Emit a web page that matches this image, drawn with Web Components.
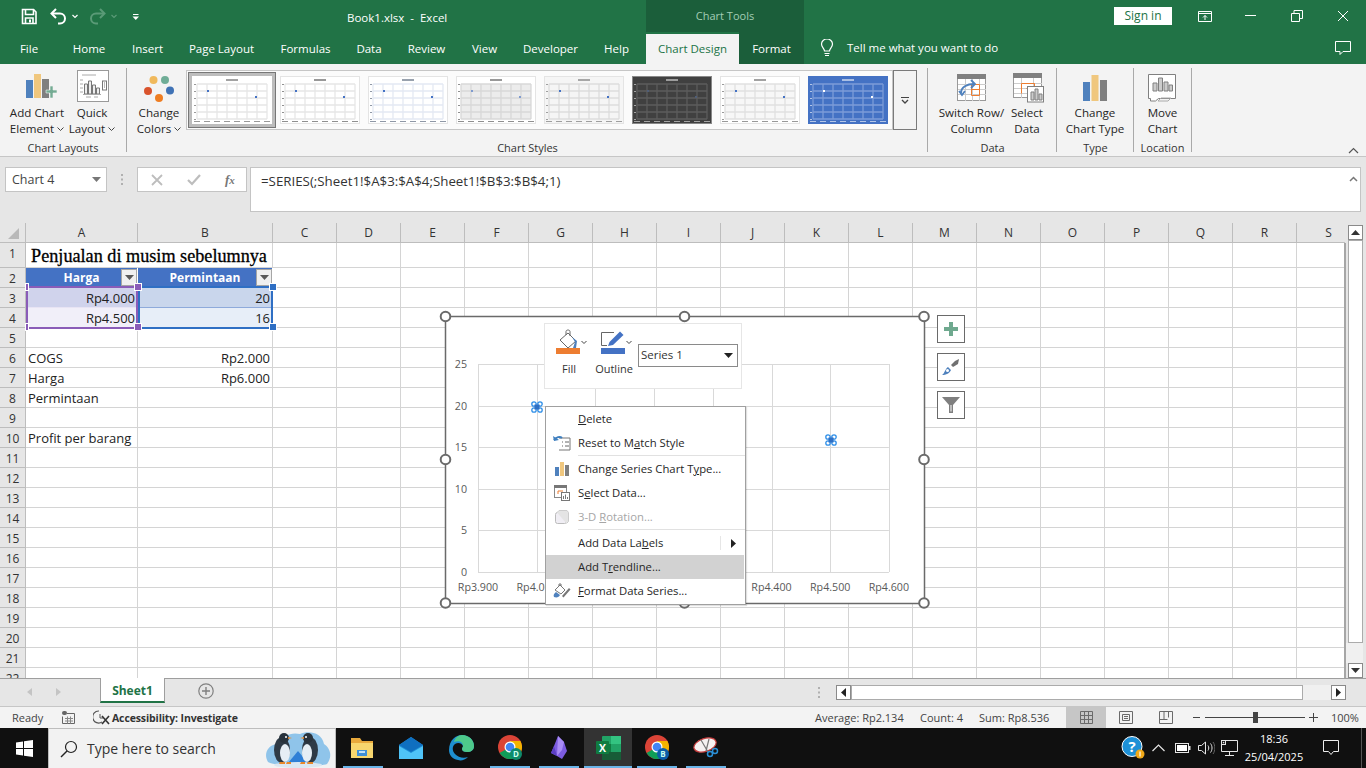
<!DOCTYPE html>
<html>
<head>
<meta charset="utf-8">
<title>Book1.xlsx - Excel</title>
<style>
  html, body { margin: 0; padding: 0; height: 100%; overflow: hidden; }
  body { width: 1366px; height: 768px; display: flex; flex-direction: column; font-family: "Open Sans", "Liberation Sans", sans-serif; font-size: 12px; background: #e6e6e6; }
</style>
</head>
<body>
<xl-titlebar></xl-titlebar>
<xl-tabs></xl-tabs>
<xl-ribbon></xl-ribbon>
<xl-formula></xl-formula>
<xl-sheet></xl-sheet>
<xl-sheettabs></xl-sheettabs>
<xl-status></xl-status>
<xl-taskbar></xl-taskbar>

<script>
const FONT = '"Open Sans", "Liberation Sans", sans-serif';

class XlTitlebar extends HTMLElement {
  constructor() {
    super();
    const shadow = this.attachShadow({ mode: 'open' });
    shadow.innerHTML = `
      <style>
        :host { display: flex; height: 32px; background: #217346; color: #fff; font: 12px ${FONT}; position: relative; flex: none; }
        .qat { width: 346px; display: flex; align-items: center; flex: none; }
        .title { width: 300px; flex: none; padding-left: 1px; box-sizing: border-box; font-size: 11.500px; line-height: 35px; }
        .tools { width: 158px; flex: none; background: #1b5e3a; color: #a3cdb5; text-align: center; font-size: 11px; line-height: 32px; }
        .right { flex: 1; display: flex; align-items: center; justify-content: flex-end; }
        .sign { width: 58px; height: 18px; background: #fff; color: #217346; text-align: center; line-height: 18px; margin-right: 10px; }
        .ctl { width: 46px; height: 32px; display: flex; align-items: center; justify-content: center; }
        svg { display: block; }
      </style>
      <div class="qat">
        <svg width="346" height="32" fill="none" stroke="#fff">
          <path d="M22.5 9.5h11l2.5 2.5v11.5h-13.5z" stroke-width="1.6"/>
          <path d="M25.5 9.5v5h8v-5M25.5 23.5v-5.500h7.500v5.500" stroke-width="1.6"/>
          <path d="M29 19.500h2v3h-2z" fill="#fff" stroke="none"/>
          <path d="M56 9l-4.500 4.500L56 18" stroke-width="2"/>
          <path d="M52 13.500h8a4.500 4.500 0 0 1 0 10h-2" stroke-width="2"/>
          <path d="M72.500 15l2.500 2.500 2.500-2.500" stroke-width="1.200"/>
          <g stroke="#5a9a77"><path d="M100 9l4.500 4.500L100 18" stroke-width="2"/><path d="M104 13.500h-8a4.500 4.500 0 0 0 0 10h2" stroke-width="2"/><path d="M111.500 15l2.500 2.500 2.500-2.500" stroke-width="1.200"/></g>
          <path d="M133 14.500h5.500" stroke-width="1"/><path d="M132.500 16.500h6.500l-3.250 3.500z" fill="#fff" stroke="none"/>
        </svg>
      </div>
      <div class="title">Book1.xlsx &nbsp;-&nbsp; Excel</div>
      <div class="tools">Chart Tools</div>
      <div class="right">
        <div class="sign">Sign in</div>
        <div class="ctl"><svg width="14" height="12" fill="none" stroke="#fff"><path d="M.5 1.500h13v10H.500zM.5 3.500h13" /><path d="M7 10V5.500M5 7.500l2-2 2 2"/></svg></div>
        <div class="ctl"><svg width="12" height="2"><path d="M0 .5h11" stroke="#fff"/></svg></div>
        <div class="ctl"><svg width="12" height="12" fill="none" stroke="#fff"><path d="M.5 3.500h8v8h-8zM3 3.500V.5h8.500v8H8.500"/></svg></div>
        <div class="ctl"><svg width="12" height="12" fill="none" stroke="#fff"><path d="M1 1l10 10M11 1L1 11"/></svg></div>
      </div>`;
  }
}

class XlTabs extends HTMLElement {
  constructor() {
    super();
    const shadow = this.attachShadow({ mode: 'open' });
    const tabs = [['File', 58], ['Home', 62], ['Insert', 55], ['Page Layout', 93], ['Formulas', 75], ['Data', 52], ['Review', 63], ['View', 53], ['Developer', 79], ['Help', 53]];
    shadow.innerHTML = `
      <style>
        :host { display: flex; height: 32px; background: #217346; color: #fff; font: 11.500px ${FONT}; flex: none; }
        .tab { flex: none; text-align: center; line-height: 34px; white-space: nowrap; }
        .spacer { width: 3px; flex: none; }
        .design { width: 93px; margin-top: 2px; background: #f3f3f3; color: #217346; line-height: 30px; box-sizing: border-box; }
        .format { width: 65px; background: #1b5e3a; }
        .tell { display: flex; align-items: center; flex: none; margin-left: 16px; gap: 13px; line-height: 34px; }
        .comment { margin-left: auto; margin-right: 14px; align-self: center; }
        svg { display: block; }
      </style>
      ${tabs.map(([t, w]) => `<div class="tab" style="width:${w}px">${t}</div>`).join('')}
      <div class="spacer"></div>
      <div class="tab design">Chart Design</div>
      <div class="tab format">Format</div>
      <div class="tell">
        <svg width="14" height="18" fill="none" stroke="#fff" stroke-width="1.200"><path d="M4.500 12c0-2.500-3-3.500-3-7a5.500 5 0 0 1 11 0c0 3.500-3 4.500-3 7z"/><path d="M4.500 14.500h5M5 16.500h4"/></svg>
        <span>Tell me what you want to do</span>
      </div>
      <svg class="comment" width="17" height="16" fill="none" stroke="#fff"><path d="M.5 1.500h15v10H8l-3 3v-3H.5z"/></svg>`;
  }
}

class XlRibbonButton extends HTMLElement {
  constructor() {
    super();
    const shadow = this.attachShadow({ mode: 'open' });
    shadow.innerHTML = `
      <style>
        :host { display: flex; flex-direction: column; align-items: center; flex: none; height: 71px; color: #262626; font: 11.600px/16px ${FONT}; text-align: center; white-space: nowrap; }
        .icon { height: 37px; display: flex; align-items: center; justify-content: center; flex: none; }
        .lbl { margin-top: -1px; }
      </style>
      <div class="icon"><slot name="icon"></slot></div>
      <div class="lbl"><slot></slot></div>`;
  }
}

class XlChartThumb extends HTMLElement {
  connectedCallback() { this.render(); }
  constructor() {
    super();
    this.attachShadow({ mode: 'open' });
  }
  render() {
    const bg = this.getAttribute('bg') || '#fff';
    const line = this.getAttribute('line') || '#e6e6e6';
    const dot = this.getAttribute('dot') || '#4472c4';
    const txt = this.getAttribute('txt') || '#555';
    const shade = this.getAttribute('shade') || 'none';
    const edge = this.getAttribute('edge') || '#e4e4e4';
    let grid = '';
    for (let i = 0; i < 6; i++) grid += `<path d="M5 ${8 + i * 7}h70"/>`;
    for (let i = 0; i < 8; i++) grid += `<path d="M${5 + i * 10} 8v35"/>`;
    let ticks = '';
    for (let i = 0; i < 6; i++) ticks += `<rect x="2" y="${8 + i * 7}" width="2" height="1" fill="${txt}" opacity=".6"/>`;
    let xticks = '';
    for (let i = 0; i < 8; i++) xticks += `<rect x="${2 + i * 10}" y="45" width="6" height="1" fill="${txt}" opacity=".6"/>`;
    this.shadowRoot.innerHTML = `
      <style>:host { display: block; width: 80px; height: 48px; flex: none; } svg { display: block; }</style>
      <svg width="80" height="48">
        <rect x=".5" y=".5" width="79" height="47" fill="${bg}" stroke="${edge}"/>
        <rect x="34" y="3" width="12" height="2" fill="${txt}" opacity=".55"/>
        <rect x="5" y="8" width="70" height="35" fill="${shade}"/>
        <g stroke="${line}" stroke-width="1.300" fill="none">${grid}</g>
        ${ticks}${xticks}
        <rect x="15" y="14" width="2" height="2" fill="${dot}"/>
        <rect x="63" y="20" width="2" height="2" fill="${dot}"/>
      </svg>`;
  }
}

class XlRibbon extends HTMLElement {
  constructor() {
    super();
    const shadow = this.attachShadow({ mode: 'open' });
    const chev = '<svg class="inl" width="7" height="4" fill="none" stroke="#444"><path d="M.5 .5l3 3 3-3"/></svg>';
    shadow.innerHTML = `
      <style>
        :host { display: flex; height: 92px; background: #f3f3f3; border-bottom: 1px solid #c6c6c6; box-sizing: content-box; padding: 0; position: relative; color: #262626; font: 12px ${FONT}; flex: none; }
        .group { flex: none; display: flex; flex-direction: column; height: 92px; position: relative; box-sizing: border-box; }
        .group::after { content: ""; position: absolute; right: 0; top: 4px; height: 84px; width: 1px; background: #a9a9a9; }
        .row { display: flex; height: 76px; padding-top: 5px; box-sizing: border-box; flex: none; }
        .label { text-align: center; line-height: 16px; color: #333; font-size: 11px; }
        .gallery { display: flex; margin: 1px 0 0 -1px; width: 707px; height: 60px; background: #fbfbfb; border: 1px solid #c6c6c6; box-sizing: border-box; padding: 5px 0 0 0; gap: 8px; position: relative; }
        .selected { position: absolute; left: 1px; top: 1px; width: 88px; height: 56px; box-sizing: border-box; border: 4px solid #bdbdbd; outline: 1px solid #777; outline-offset: -1px; }
        .thumbs { display: flex; gap: 8px; padding-left: 5px; }
        .more { width: 24px; height: 60px; margin-top: 1px; flex: none; box-sizing: border-box; border: 1px solid #7a7a7a; display: flex; align-items: center; justify-content: center; background: #f3f3f3; }
        .collapse { position: absolute; right: 7px; bottom: 2px; }
        svg { display: block; }
        svg.inl { display: inline-block; margin-left: 3px; vertical-align: 2px; }
      </style>

      <div class="group" style="width:127px">
        <div class="row" style="padding-left:5px">
          <xl-ribbon-button style="width:64px">
            <svg slot="icon" width="32" height="34" style="margin-left:7px">
              <rect x="1" y="9" width="7" height="18" fill="#4f81bd"/><rect x="9" y="3" width="7" height="24" fill="#f0c77e"/><rect x="17" y="8" width="7" height="19" fill="#7f7f7f"/>
              <path d="M21 19h4v-4h3v4h4v3h-4v5h-3v-5h-4z" fill="#74ab93" stroke="#f3f3f3" stroke-width=".6"/>
            </svg>
            Add Chart<br>Element${chev}
          </xl-ribbon-button>
          <xl-ribbon-button style="width:46px">
            <svg slot="icon" width="32" height="32" fill="none" style="margin:-3px 0 0 1px">
              <rect x=".5" y=".5" width="31" height="31" stroke="#999" fill="#fff"/>
              <path d="M5 5h14M3 10h3M3 14h3M3 18h3M3 22h3" stroke="#aaa"/>
              <path d="M7.500 24V14h3v10zM11.500 24V11h3v13zM15.500 24V15h3v9zM19.500 24v-6h3v6z" stroke="#777" fill="#eee"/>
              <path d="M6 24.500h18M9 27h5M17 27h4" stroke="#aaa"/>
              <rect x="25.500" y="11" width="4" height="9" stroke="#777" /><path d="M27 13h1M27 15h1M27 17h1" stroke="#777"/>
            </svg>
            Quick<br>Layout${chev}
          </xl-ribbon-button>
        </div>
        <div class="label" style="padding-right:1px">Chart Layouts</div>
      </div>

      <div class="group" style="width:801px">
        <div class="row" style="padding-left:4px">
          <xl-ribbon-button style="width:56px">
            <svg slot="icon" width="30" height="30">
              <circle cx="9.500" cy="7" r="4" fill="#f0b95c"/><circle cx="21" cy="7" r="4" fill="#70ad97"/><circle cx="4" cy="18" r="4" fill="#d9532c"/><circle cx="26" cy="17.500" r="4" fill="#3f72b5"/><circle cx="15" cy="25" r="4" fill="#ee7d22"/>
            </svg>
            Change<br>Colors${chev}
          </xl-ribbon-button>
          <div class="gallery">
            <div class="selected"></div>
            <div class="thumbs">
              <xl-chart-thumb edge="#fff"></xl-chart-thumb>
              <xl-chart-thumb txt="#444"></xl-chart-thumb>
              <xl-chart-thumb line="#e3e9f3" txt="#44546a"></xl-chart-thumb>
              <xl-chart-thumb shade="#ececec" line="#d8d8d8" txt="#444" dot="#7f9bcf"></xl-chart-thumb>
              <xl-chart-thumb bg="#f5f5f5" line="#dcdcdc" txt="#666"></xl-chart-thumb>
              <xl-chart-thumb bg="#404040" line="#5c5c5c" txt="#e8e8e8" dot="#4f5d76" edge="#888"></xl-chart-thumb>
              <xl-chart-thumb line="#e0e0e0" txt="#555" shade="#f7f7f7"></xl-chart-thumb>
              <xl-chart-thumb bg="#4472c4" line="#7c9cd8" txt="#fff" dot="#fff" edge="#4472c4"></xl-chart-thumb>
            </div>
          </div>
          <div class="more"><svg width="10" height="9" fill="none" stroke="#444"><path d="M1 1.500h8"/><path d="M2 4l3 3 3-3" stroke-width="1.300"/></svg></div>
        </div>
        <div class="label">Chart Styles</div>
      </div>

      <div class="group" style="width:129px">
        <div class="row" style="padding-left:10px">
          <xl-ribbon-button style="width:67px">
            <svg slot="icon" width="30" height="28" fill="none">
              <rect x=".5" y=".5" width="28" height="26" fill="#fff" stroke="#999"/><rect x="0" y="0" width="29" height="5" fill="#808080"/>
              <path d="M1 10.500h28M1 15.500h28M1 20.500h28M8.500 5v22M15.500 5v22M22.500 5v22" stroke="#ccc"/>
              <path d="M14.500 10.500h8v11h-8zM14.500 15.500h8" stroke="#ed7d31" />
              <path d="M4 19c0-6 6-9 13-9" stroke="#4f81bd" stroke-width="2"/><path d="M14 6l4 4-4 4" stroke="#4f81bd" stroke-width="1.800"/><path d="M2 17l3 4 3-4" stroke="#4f81bd" stroke-width="1.800"/>
            </svg>
            Switch Row/<br>Column
          </xl-ribbon-button>
          <xl-ribbon-button style="width:44px">
            <svg slot="icon" width="31" height="30" fill="none" style="margin-left:2px">
              <rect x=".5" y=".5" width="28" height="24" fill="#fff" stroke="#999"/><rect x="0" y="0" width="29" height="5" fill="#808080"/>
              <path d="M1 10.500h28M1 15.500h28M1 20.500h28M8.500 5v20M20.500 5v20" stroke="#ccc"/>
              <path d="M8.500 20.500v-10h13v5h-8" stroke="#ed7d31"/>
              <rect x="14.500" y="13.500" width="16" height="15.500" fill="#fff" stroke="#808080"/>
              <path d="M18 27v-8h3v8zM22 27V16h3v11zM26 27v-6h3v6z" fill="#ccc" stroke="#808080"/>
            </svg>
            Select<br>Data
          </xl-ribbon-button>
        </div>
        <div class="label">Data</div>
      </div>

      <div class="group" style="width:77px">
        <div class="row" style="justify-content:center;padding-right:1px">
          <xl-ribbon-button>
            <svg slot="icon" width="24" height="28"><rect x="0" y="8" width="7" height="19" fill="#4f81bd"/><rect x="8.500" y="1" width="7" height="26" fill="#f0c77e"/><rect x="17" y="6" width="7" height="21" fill="#7f7f7f"/></svg>
            Change<br>Chart Type
          </xl-ribbon-button>
        </div>
        <div class="label">Type</div>
      </div>

      <div class="group" style="width:58px">
        <div class="row" style="justify-content:center;padding-right:1px">
          <xl-ribbon-button>
            <svg slot="icon" width="29" height="28" fill="none">
              <path d="M.5 .5h27v24h-17l-3 2.500H2.500V24.500H.5z" fill="#fff" stroke="#808080"/>
              <path d="M5 17V9h4v8zM10.500 17V4h4v13zM16 17V8h4v9zM21 17v-6h3.500v6z" fill="#ccc" stroke="#808080"/>
              <path d="M10 27l3-3h10l-3 3z" stroke="#aaa"/>
            </svg>
            Move<br>Chart
          </xl-ribbon-button>
        </div>
        <div class="label" style="padding-right:1px">Location</div>
      </div>

      <svg class="collapse" width="11" height="7" fill="none" stroke="#555" stroke-width="1.200"><path d="M1 6l4.500-4.500L10 6"/></svg>`;
  }
}

class XlFormula extends HTMLElement {
  constructor() {
    super();
    const shadow = this.attachShadow({ mode: 'open' });
    shadow.innerHTML = `
      <style>
        :host { display: flex; height: 66px; box-sizing: border-box; padding: 10px 5px 0 5px; background: #e6e6e6; color: #444; font: 12px ${FONT}; flex: none; align-items: flex-start; }
        .box { background: #fff; border: 1px solid #c4c4c4; box-sizing: border-box; }
        .name { width: 102px; height: 25px; padding-left: 6px; line-height: 23px; position: relative; font-size: 12.500px; }
        .name svg { position: absolute; right: 5px; top: 9px; }
        .dots { width: 30px; height: 25px; display: flex; align-items: center; justify-content: center; }
        .fn { width: 110px; height: 25px; display: flex; align-items: center; color: #777; }
        .fn svg { display: block; }
        .text { margin-left: 3px; width: 1111px; height: 45px; padding: 4px 0 0 10px; line-height: 18px; position: relative; color: #333; font-size: 13.300px; }
        .text svg { position: absolute; right: 2px; top: 8px; }
        .fx { font: italic bold 13px "Liberation Serif", serif; color: #777; margin-left: 24px; }
      </style>
      <div class="box name">Chart 4<svg width="9" height="5"><path d="M0 0h9L4.500 5z" fill="#777"/></svg></div>
      <div class="dots"><svg width="3" height="11"><path d="M0 0h2v2H0zM0 4.500h2v2H0zM0 9h2v2H0z" fill="#b0b0b0"/></svg></div>
      <div class="box fn">
        <svg width="12" height="12" style="margin-left:13px" fill="none" stroke="#bdbdbd" stroke-width="1.800"><path d="M1 1l10 10M11 1L1 11"/></svg>
        <svg width="14" height="12" style="margin-left:24px" fill="none" stroke="#bdbdbd" stroke-width="2.200"><path d="M1 6l4 4 8-9"/></svg>
        <span class="fx">f<span style="font-size:11px">x</span></span>
      </div>
      <div class="box text">=SERIES(;Sheet1!$A$3:$A$4;Sheet1!$B$3:$B$4;1)
        <svg width="9" height="6" fill="none" stroke="#777" stroke-width="1.500"><path d="M1 5l3.500-3.500L8 5"/></svg>
      </div>`;
  }
}

class XlChart extends HTMLElement {
  constructor() {
    super();
    const shadow = this.attachShadow({ mode: 'open' });
    // chart coordinates are page coordinates minus (445, 316)
    const ox = 445, oy = 316;
    const xs = [], ys = [];
    for (let i = 0; i < 8; i++) xs.push(478 + i * 58.7 - ox);
    for (let i = 0; i < 6; i++) ys.push(364 + i * 41.6 - oy);
    const grid = xs.map(x => `<path d="M${Math.round(x) + .5} ${ys[0]}V${ys[5]}"/>`).join('') +
      ys.map(y => `<path d="M${xs[0]} ${Math.round(y) + .5}H${xs[7]}"/>`).join('');
    const ylab = ['25', '20', '15', '10', '5', '0'].map((t, i) => `<text x="22" y="${ys[i] + 4}" text-anchor="end">${t}</text>`).join('');
    // Rp4.100 to Rp4.300 sit behind the context menu, so they are left out
    const xlab = [['Rp3.900', 0], ['Rp4.000', 1], ['Rp4.400', 5], ['Rp4.500', 6], ['Rp4.600', 7]].map(([t, i]) => `<text x="${xs[i]}" y="275" text-anchor="middle">${t}</text>`).join('');
    const pt = (x, y) => `<g transform="translate(${x} ${y})"><g fill="#fff" stroke="#2f8fe8" stroke-width="1.300"><circle cx="-3" cy="-3" r="2.200"/><circle cx="3" cy="-3" r="2.200"/><circle cx="-3" cy="3" r="2.200"/><circle cx="3" cy="3" r="2.200"/></g><path d="M-2.500-2.500h5v5h-5z" fill="#2f6fc4"/></g>`;
    const handle = (x, y) => `<circle cx="${x}" cy="${y}" r="4.800" fill="#fff" stroke="#6a6a6a" stroke-width="2"/>`;
    shadow.innerHTML = `
      <style>
        :host { display: block; position: absolute; left: 445px; top: 93px; width: 480px; height: 288px; background: #fff; font: 11.500px ${FONT}; }
        svg.main { display: block; position: absolute; left: 0; top: 0; overflow: visible; }
        text { fill: #595959; font: 10.700px ${FONT}; }
      </style>
      <svg class="main" width="480" height="288">
        <rect x="0.500" y="0.500" width="479" height="287" fill="#fff" stroke="#6a6a6a" stroke-width="1.500"/>
        <g stroke="#d9d9d9" fill="none">${grid}</g>
        ${ylab}${xlab}
        ${pt(92, 91)}${pt(386, 124)}
        ${handle(.5, .5)}${handle(239.500, .5)}${handle(479, .5)}${handle(.5, 143.500)}${handle(479, 143.500)}${handle(.5, 287)}${handle(239.500, 287)}${handle(479, 287)}
      </svg>
      <slot></slot>`;
  }
}

class XlMiniBar extends HTMLElement {
  constructor() {
    super();
    const shadow = this.attachShadow({ mode: 'open' });
    shadow.innerHTML = `
      <style>
        :host { position: absolute; left: 99px; top: 7px; width: 198px; height: 66px; background: #fff; border: 1px solid #e6e6e6; box-sizing: border-box; display: flex; font: 11px ${FONT}; color: #333; }
        .col { display: flex; flex-direction: column; align-items: center; flex: none; }
        .icon { height: 32px; margin-top: 5px; }
        .lbl { line-height: 16px; }
        .combo { margin: 20px 0 0 3px; width: 100px; height: 23px; border: 1px solid #8a8a8a; box-sizing: border-box; padding-left: 2px; line-height: 20px; position: relative; font-size: 11.500px; }
        .combo svg { position: absolute; right: 4px; top: 8px; }
        svg { display: block; }
      </style>
      <div class="col" style="width:48px">
        <svg class="icon" width="36" height="32" fill="none">
          <rect x="5" y="19" width="24" height="6" fill="#ed7d31"/>
          <path d="M9 11L17 4l8 8-8 7z" fill="#fff" stroke="#666"/>
          <path d="M15 6V2.500c0-2 4-2 4 0V7" stroke="#666"/>
          <path d="M21 8l5 4-1 7h-3l2-6z" fill="#4f81bd"/>
          <path d="M30.500 12l2.500 2.500 2.500-2.500" stroke="#444"/>
        </svg>
        <div class="lbl">Fill</div>
      </div>
      <div class="col" style="width:42px">
        <svg class="icon" width="38" height="32" fill="none">
          <rect x="6" y="19" width="24" height="6" fill="#4472c4"/>
          <path d="M19 3.500H6.500v13H12" stroke="#666"/>
          <path d="M13 17l1.500-4L25 2.500l3.500 3.500L18 16z" fill="#4472c4"/>
          <path d="M31.500 12l2.500 2.500 2.500-2.500" stroke="#444"/>
        </svg>
        <div class="lbl">Outline</div>
      </div>
      <div class="combo">Series 1<svg width="9" height="5"><path d="M0 0h9L4.500 5z" fill="#222"/></svg></div>`;
  }
}

class XlMenuItem extends HTMLElement {
  constructor() {
    super();
    const shadow = this.attachShadow({ mode: 'open' });
    shadow.innerHTML = `
      <style>
        :host { display: flex; height: 24px; align-items: center; position: relative; color: #262626; font: 11.300px ${FONT}; white-space: nowrap; }
        :host([hot]) { background: #d2d2d2; margin-right: 1px; }
        :host([off]) { color: #a6a6a6; }
        .icon { width: 32px; height: 24px; display: flex; align-items: center; justify-content: center; flex: none; }
        .txt { padding-bottom: 1px; }
        .arrow { display: none; position: absolute; right: 0; width: 24px; align-items: center; justify-content: center; border-left: 1px solid #e6e6e6; height: 14px; top: 5px; }
        :host([sub]) .arrow { display: flex; }
      </style>
      <div class="icon"><slot name="icon"></slot></div>
      <div class="txt"><slot></slot></div>
      <div class="arrow"><svg width="5" height="9"><path d="M0 0l5 4.500L0 9z" fill="#222"/></svg></div>`;
  }
}

class XlMenu extends HTMLElement {
  constructor() {
    super();
    const shadow = this.attachShadow({ mode: 'open' });
    shadow.innerHTML = `
      <style>
        :host { position: absolute; left: 100px; top: 90px; width: 201px; height: 199px; box-sizing: border-box; background: #fff; border: 1px solid #a0a0a0; box-shadow: 1px 1px 1px rgba(0,0,0,.12); }
        .in { display: flex; flex-direction: column; }
      </style>
      <div class="in"><slot></slot></div>`;
  }
}

class XlMenuSep extends HTMLElement {
  constructor() {
    super();
    this.attachShadow({ mode: 'open' }).innerHTML = `<style>:host { display: block; height: 2px; margin-left: 32px; background: linear-gradient(#e1e1e1 1px, transparent 1px); }</style>`;
  }
}

class XlSideButton extends HTMLElement {
  constructor() {
    super();
    this.attachShadow({ mode: 'open' }).innerHTML = `
      <style>:host { display: flex; width: 28px; height: 28px; box-sizing: border-box; background: #fff; border: 1px solid #6a6a6a; align-items: center; justify-content: center; flex: none; }</style>
      <slot></slot>`;
  }
}

class XlSideButtons extends HTMLElement {
  constructor() {
    super();
    this.attachShadow({ mode: 'open' }).innerHTML = `
      <style>:host { position: absolute; left: 937px; top: 92px; display: flex; flex-direction: column; gap: 10px; }</style>
      <slot></slot>`;
  }
}

class XlSheet extends HTMLElement {
  constructor() {
    super();
    const shadow = this.attachShadow({ mode: 'open' });
    const colNames = 'ABCDEFGHIJKLMNOPQRS'.split('');
    let cells = `<div class="hd corner"><svg width="14" height="13"><path d="M13 1v11H2z" fill="#b9b9b9"/></svg></div>`;
    colNames.forEach(c => { cells += `<div class="hd col">${c}</div>`; });
    const data = {
      3: [['Rp4.000', 'r a3'], ['20', 'r b3']],
      4: [['Rp4.500', 'r a4'], ['16', 'r b4']],
      6: [['COGS', ''], ['Rp2.000', 'r']],
      7: [['Harga', ''], ['Rp6.000', 'r']],
      8: [['Permintaan', ''], ['', '']],
      10: [['Profit per barang', 'ov'], ['', '']],
    };
    for (let r = 1; r <= 22; r++) {
      cells += `<div class="hd row">${r}</div>`;
      if (r === 1) {
        cells += `<div class="c title" style="grid-column:span 2">Penjualan di musim sebelumnya</div>`;
      } else if (r === 2) {
        cells += `<div class="c th">Harga<span class="flt"><svg width="9" height="5"><path d="M0 0h9L4.500 5z" fill="#595959"/></svg></span></div>`;
        cells += `<div class="c th">Permintaan<span class="flt"><svg width="9" height="5"><path d="M0 0h9L4.500 5z" fill="#595959"/></svg></span></div>`;
      } else if (data[r]) {
        cells += data[r].map(([t, k]) => `<div class="c ${k}">${t}</div>`).join('');
      } else {
        cells += `<div class="c"></div><div class="c"></div>`;
      }
      for (let i = 0; i < 17; i++) cells += `<div class="c"></div>`;
    }
    shadow.innerHTML = `
      <style>
        :host { display: flex; height: 455px; position: relative; background: #fff; font: 13px ${FONT}; color: #222; flex: none; overflow: hidden; }
        .wrap { width: 1345px; height: 455px; flex: none; overflow: hidden; }
        .grid { display: grid; grid-template-columns: 26px 112px 135px repeat(17, 64px); grid-template-rows: 20px 25px repeat(21, 20px); width: 1362px; }
        .hd { background: #e6e6e6; box-sizing: border-box; border-right: 1px solid #bdbdbd; border-bottom: 1px solid #bdbdbd; color: #333; text-align: center; overflow: hidden; font-size: 12px; }
        .col { line-height: 20px; }
        .row { line-height: 21px; }
        .corner { display: flex; align-items: flex-end; justify-content: flex-end; padding: 0 5px 2px 0; }
        .c { box-sizing: border-box; border-right: 1px solid #d4d4d4; border-bottom: 1px solid #d4d4d4; padding: 0 2px 0 2px; line-height: 21px; white-space: nowrap; }
        .r { text-align: right; }
        .ov { overflow: visible; }
        .title { font: 18.200px/26px "Liberation Serif", serif; text-align: center; padding: 0; -webkit-text-stroke: .3px #000; color: #000; }
        .th { background: #4472c4; color: #fff; font-weight: 700; font-size: 12px; border-color: #4472c4; border-right-color: #fff; text-align: center; position: relative; padding: 0; line-height: 19px; }
        .flt { position: absolute; right: 0; top: 1px; width: 16px; height: 17px; box-sizing: border-box; background: #f0f0f0; border: 1px solid #a6a6a6; display: flex; align-items: center; justify-content: center; }
        .a3 { background: #d0d3ec; border-bottom-color: #e8e4f4; }
        .b3 { background: #c9d6ec; border-bottom-color: #8eaadb; }
        .a4 { background: #f1eff9; }
        .b4 { background: #e7eef8; }
        .rng { position: absolute; box-sizing: border-box; border: 2px solid; pointer-events: none; }
        .h { position: absolute; width: 6px; height: 6px; border: 1px solid #fff; box-sizing: content-box; }
        .edge { position: absolute; left: 1344px; top: 20px; width: 2px; bottom: 0; background: #a6a6a6; }
        .scroll { width: 21px; flex: none; background: #e6e6e6; display: flex; flex-direction: column; box-sizing: border-box; padding: 2px 3px 0 3px; align-items: stretch; }
        .btn { height: 15px; flex: none; background: #fff; border: 1px solid #8a8a8a; box-sizing: border-box; display: flex; align-items: center; justify-content: center; }
        .thumb { background: #fff; border: 1px solid #ababab; box-sizing: border-box; height: 403px; flex: none; }
        .gap { flex: 1; background: #f0f0f0; margin: 0 0 0 -2px; }
        svg { display: block; }
      </style>
      <div class="wrap"><div class="grid">${cells}</div></div>
      <div class="edge"></div>
      <div class="scroll">
        <div class="btn"><svg width="9" height="5"><path d="M0 5h9L4.500 0z" fill="#333"/></svg></div>
        <div class="thumb"></div>
        <div class="gap"></div>
        <div class="btn"><svg width="9" height="5"><path d="M0 0h9L4.500 5z" fill="#333"/></svg></div>
      </div>
      <div class="rng" style="left:26px;top:63px;width:112px;height:43px;border-color:#8a5cb8"></div>
      <div class="rng" style="left:138px;top:63px;width:135px;height:43px;border-color:#2f6fc4"></div>
      <div class="h" style="left:25px;top:60px;background:#8a5cb8;width:2px"></div>
      <div class="h" style="left:25px;top:100px;background:#8a5cb8;width:2px"></div>
      <div class="h" style="left:134px;top:60px;background:#8a5cb8"></div>
      <div class="h" style="left:134px;top:100px;background:#8a5cb8"></div>
      <div class="h" style="left:269px;top:60px;background:#2f6fc4"></div>
      <div class="h" style="left:269px;top:100px;background:#2f6fc4"></div>
      <xl-chart>
        <xl-mini-bar></xl-mini-bar>
        <xl-menu>
          <xl-menu-item><u>D</u>elete</xl-menu-item>
          <xl-menu-item>
            <svg slot="icon" width="18" height="16" fill="none"><path d="M6 3h11v12H6" stroke="#777" fill="#fff"/><path d="M9 7h1M12 7h4M9 11h1M12 11h4" stroke="#666"/><path d="M1 5c2-3 6-4 8-2" stroke="#3f7fbf" stroke-width="2"/><path d="M0 1l1 5 5-1z" fill="#3f7fbf"/></svg>
            Reset to M<u>a</u>tch Style
          </xl-menu-item>
          <xl-menu-sep></xl-menu-sep>
          <xl-menu-item>
            <svg slot="icon" width="14" height="14"><rect x="0" y="5" width="4" height="9" fill="#4f81bd"/><rect x="5" y="0" width="4" height="14" fill="#f0c77e"/><rect x="10" y="3" width="4" height="11" fill="#7f7f7f"/></svg>
            Change Series Chart T<u>y</u>pe...
          </xl-menu-item>
          <xl-menu-item>
            <svg slot="icon" width="16" height="16" fill="none"><rect x=".5" y=".5" width="12" height="12" fill="#fff" stroke="#888"/><rect width="13" height="3" fill="#777"/><path d="M4 9V6h5" stroke="#ed7d31"/><rect x="7.500" y="7.500" width="8" height="8" fill="#fff" stroke="#777"/><path d="M9.500 14v-3M11.500 14V9.500M13.500 14v-2" stroke="#777"/></svg>
            S<u>e</u>lect Data...
          </xl-menu-item>
          <xl-menu-item off>
            <svg slot="icon" width="14" height="14" fill="none"><rect x=".5" y="2.500" width="11" height="11" rx="2" fill="#f0eef4" stroke="#bbb"/><path d="M2 2.500l2-2h8l1.500 2v9l-2 2" stroke="#ccc" fill="#e4e4e4"/></svg>
            3-D <u>R</u>otation...
          </xl-menu-item>
          <xl-menu-sep></xl-menu-sep>
          <xl-menu-item sub>Add Data La<u>b</u>els</xl-menu-item>
          <xl-menu-item hot>Add T<u>r</u>endline...</xl-menu-item>
          <xl-menu-item>
            <svg slot="icon" width="18" height="16" fill="none"><path d="M2 7l5-5 5 5-4 4z" fill="#fff" stroke="#777"/><path d="M6 3V1h2v2" stroke="#777"/><path d="M3 9c-2 2-3 3-2 5 3 1 5 0 6-2" fill="#4f81bd"/><path d="M9 13l7-8 1.500 1.500-7 8z" fill="#777"/></svg>
            <u>F</u>ormat Data Series...
          </xl-menu-item>
        </xl-menu>
      </xl-chart>
      <xl-side-buttons>
        <xl-side-button><svg width="16" height="16"><path d="M6 1h4v5h5v4h-5v5H6v-5H1V6h5z" fill="#6fa98f"/></svg></xl-side-button>
        <xl-side-button><svg width="18" height="18"><path d="M17 1l-1 5-5 3-2-2 4-4z" fill="#707070"/><path d="M0 17c3-2 3-6 6-8l3 3c-1 3-5 5-9 5z" fill="#4f81bd"/><circle cx="5.500" cy="12.500" r="1.500" fill="#fff"/></svg></xl-side-button>
        <xl-side-button><svg width="20" height="18"><path d="M1 1h18l-7 8v8H8V9z" fill="#7f7f7f"/><path d="M9.500 9h1v6.500h-1z" fill="#fff"/></svg></xl-side-button>
      </xl-side-buttons>`;
  }
}

class XlSheettabs extends HTMLElement {
  constructor() {
    super();
    const shadow = this.attachShadow({ mode: 'open' });
    shadow.innerHTML = `
      <style>
        :host { display: flex; height: 29px; background: #e6e6e6; border-top: 1px solid #9e9e9e; border-bottom: 1px solid #c6c6c6; box-sizing: border-box; align-items: flex-start; font: 12px ${FONT}; flex: none; position: relative; }
        .nav { width: 100px; flex: none; height: 26px; display: flex; align-items: center; box-sizing: border-box; padding-left: 27px; gap: 24px; }
        .tab { width: 65px; height: 25px; flex: none; box-sizing: border-box; margin-top: -1px; background: #fff; color: #217346; font-weight: 700; text-align: center; line-height: 26px; border: 1px solid #9e9e9e; border-top: 0; border-bottom: 2px solid #217346; }
        .plus { margin: 4px 0 0 33px; flex: none; }
        .dots { margin: 8px 0 0 0; position: absolute; left: 818px; }
        .hs { position: absolute; left: 836px; display: flex; height: 14px; margin-top: 6px; }
        .b { width: 15px; height: 15px; background: #fff; box-sizing: border-box; border: 1px solid #8a8a8a; display: flex; align-items: center; justify-content: center; }
        .t { width: 452px; height: 15px; background: #fff; border: 1px solid #ababab; box-sizing: border-box; }
        .g { width: 28px; background: #f0f0f0; height: 15px; }
        svg { display: block; }
      </style>
      <div class="nav">
        <svg width="5" height="8"><path d="M5 0v8L0 4z" fill="#c4c4c4"/></svg>
        <svg width="5" height="8"><path d="M0 0v8l5-4z" fill="#c4c4c4"/></svg>
      </div>
      <div class="tab">Sheet1</div>
      <svg class="plus" width="16" height="16" fill="none" stroke="#808080"><circle cx="8" cy="8" r="7.200" stroke-width="1.200"/><path d="M8 4v8M4 8h8" stroke-width="1.400"/></svg>
      <svg class="dots" width="3" height="11"><path d="M0 0h2v2H0zM0 4.500h2v2H0zM0 9h2v2H0z" fill="#b0b0b0"/></svg>
      <div class="hs">
        <div class="b"><svg width="5" height="9"><path d="M5 0v9L0 4.500z" fill="#222"/></svg></div>
        <div class="t"></div><div class="g"></div>
        <div class="b"><svg width="5" height="9"><path d="M0 0v9l5-4.500z" fill="#222"/></svg></div>
      </div>`;
  }
}

class XlStatus extends HTMLElement {
  constructor() {
    super();
    const shadow = this.attachShadow({ mode: 'open' });
    shadow.innerHTML = `
      <style>
        :host { display: flex; height: 21px; background: #f3f3f3; color: #444; font: 11px ${FONT}; align-items: center; flex: none; }
        .s { white-space: nowrap; flex: none; }
        .view { width: 40px; height: 21px; display: flex; align-items: center; justify-content: center; flex: none; }
        .on { background: #c6c6c6; }
        .slider { width: 100px; height: 1px; background: #444; position: relative; margin: 0 0 0 4px; flex: none; }
        .slider i { position: absolute; left: 48px; top: -5px; width: 5px; height: 11px; background: #444; }
        svg { display: block; flex: none; }
      </style>
      <span class="s" style="margin-left:12px;width:50px">Ready</span>
      <svg width="13" height="13" fill="none" style="margin-right:18px"><rect x="0" y="0" width="5" height="4" rx="2" fill="#666"/><path d="M5 2.500h7.500v10H.5V5.500" stroke="#666"/><path d="M3 7.500h8M3 10h8M5.500 5.500v7M8.500 5.500v7" stroke="#888"/></svg>
      <svg width="17" height="15" fill="none" stroke="#555" style="margin-right:2px"><path d="M6 1a6 6 0 1 0 3 11" stroke-width="1.200"/><path d="M7 4v4h3" /><path d="M9 6l7 8M16 6l-7 8" stroke="#333" stroke-width="1.600"/></svg>
      <span class="s" style="width:703px;font-weight:700;font-size:10.500px;letter-spacing:-.12px;color:#333">Accessibility: Investigate</span>
      <span class="s" style="width:105px">Average: Rp2.134</span>
      <span class="s" style="width:59px">Count: 4</span>
      <span class="s" style="width:87px">Sum: Rp8.536</span>
      <div class="view on"><svg width="13" height="13" fill="none" stroke="#6a6a6a"><path d="M.5.5h12v12H.500zM.5 4.500h12M.5 8.500h12M4.500.5v12M8.500.5v12"/></svg></div>
      <div class="view"><svg width="14" height="13" fill="none" stroke="#6a6a6a"><path d="M.5.5h13v12H.500zM3.500 3.500h7v6h-7zM5 5.500h4M5 7.500h4"/></svg></div>
      <div class="view"><svg width="14" height="13" fill="none" stroke="#6a6a6a"><path d="M.5.5h13v12H.500zM.5 8.500h8M5 .5v8M9.500 .5v6"/></svg></div>
      <svg width="8" height="2" style="margin-left:7px"><path d="M0 .5h7" stroke="#444"/></svg>
      <div class="slider"><i></i></div>
      <svg width="9" height="9" style="margin-left:4px"><path d="M4 0h1v4h4v1H5v4H4V5H0V4h4z" fill="#444"/></svg>
      <span class="s" style="margin-left:13px">100%</span>`;
  }
}

class XlTaskbar extends HTMLElement {
  constructor() {
    super();
    const shadow = this.attachShadow({ mode: 'open' });
    const chrome = (badge, letter) => `
      <svg width="26" height="26" viewBox="0 0 26 26" style="margin-left:2px">
        <circle cx="12" cy="12" r="12" fill="#db4437"/>
        <path d="M12 12L1.600 18a12 12 0 0 0 14 5.500z" fill="#0f9d58"/>
        <path d="M12 6h10.400a12 12 0 0 1-6.800 17.500L12 12z" fill="#f4b400"/>
        <circle cx="12" cy="12" r="5.500" fill="#fff"/><circle cx="12" cy="12" r="4.300" fill="#4285f4"/>
        <circle cx="18" cy="19" r="6" fill="${badge}"/><text x="18" y="22" text-anchor="middle" font-size="8" font-weight="700" font-family="Open Sans" fill="#cfe">${letter}</text>
      </svg>`;
    shadow.innerHTML = `
      <style>
        :host { display: flex; height: 40px; background: #101010; color: #fff; font: 12px ${FONT}; flex: none; position: relative; }
        :host::after { content: ""; position: absolute; left: 1361px; top: 0; width: 1px; height: 40px; background: #555; }
        .start { width: 48px; flex: none; display: flex; align-items: center; justify-content: center; }
        .search { width: 288px; flex: none; background: #f2f2f2; border: 1px solid #bdbdbd; border-bottom: 0; box-sizing: border-box; display: flex; align-items: center; position: relative; color: #333; font-size: 14px; }
        .search span { margin-left: 9px; }
        .search .peng { position: absolute; left: 215px; top: 1px; }
        .apps { display: flex; margin-left: 7px; flex: none; }
        .app { width: 40px; height: 40px; display: flex; align-items: center; justify-content: center; position: relative; flex: none; box-sizing: border-box; }
        .app.wide { width: 48px; }
        .app.run::after { content: ""; position: absolute; left: 0; right: 0; bottom: 0; height: 2px; background: #6ab4e8; }
        .app.act { background: #333; }
        .tray { margin-left: auto; display: flex; align-items: center; flex: none; }
        .clock { text-align: center; width: 66px; line-height: 18px; font-size: 11px; margin-left: 3px; }
        svg { display: block; flex: none; }
      </style>
      <div class="start"><svg width="17" height="17"><path d="M0 2.500l7-1v6.500H0zM8 1.300L17 0v8H8zM0 9h7v6.500l-7-1zM8 9h9v8l-9-1.300z" fill="#fff"/></svg></div>
      <div class="search">
        <svg width="18" height="18" style="margin-left:11px" fill="none" stroke="#222" stroke-width="1.200"><circle cx="11" cy="7" r="5.500"/><path d="M7 11l-6 6" stroke-width="1.500"/></svg>
        <span>Type here to search</span>
        <svg class="peng" width="68" height="38" viewBox="0 0 68 38">
          <path d="M4 32c-5-8 0-18 10-18 4-9 14-12 22-10 8-4 22-2 24 10 6 4 9 12 3 20-6 3-52 3-59-2z" fill="#8fc4ea"/>
          <path d="M24 33l10-12 10 12z" fill="#2f7fd6"/>
          <ellipse cx="34" cy="35" rx="24" ry="3" fill="#dbe7f2"/>
          <ellipse cx="18" cy="20" rx="8" ry="13" fill="#2e3a46"/><ellipse cx="21" cy="23" rx="5" ry="9" fill="#e6eef5"/><circle cx="20" cy="8" r="5" fill="#28323c"/><path d="M24 7l4 1-4 1z" fill="#e8872a"/><circle cx="22" cy="7" r="1" fill="#fff"/><path d="M16 32h5v2h-6zM23 32h4v2h-5z" fill="#e8872a"/>
          <ellipse cx="46" cy="20" rx="8" ry="13" fill="#2e3a46"/><ellipse cx="43" cy="23" rx="5" ry="9" fill="#e6eef5"/><circle cx="44" cy="8" r="5" fill="#28323c"/><path d="M40 7l-4 1 4 1z" fill="#e8872a"/><circle cx="42" cy="7" r="1" fill="#fff"/><path d="M44 32h5v2h-6zM37 32h4v2h-5z" fill="#e8872a"/>
        </svg>
      </div>
      <div class="apps">
        <div class="app run" style="margin-right:4px">
          <svg width="24" height="22"><path d="M0 1h9l2 3h11v3H0z" fill="#e8a93c"/><rect y="6" width="22" height="15" fill="#f7d66e"/><path d="M6 13h10v6H6z" fill="#3f8fd6"/><path d="M8 14h6v2H8z" fill="#bfe0f7"/></svg>
        </div>
        <div class="app wide" style="margin-right:2px">
          <svg width="24" height="22"><path d="M12 0l12 8v14H0V8z" fill="#1f8fd6"/><path d="M12 0l12 8-12 7L0 8z" fill="#0f6fc0"/><path d="M0 9l12 7 12-7v13H0z" fill="#4fc3f7"/></svg>
        </div>
        <div class="app wide" style="margin-right:5px">
          <svg width="26" height="26" viewBox="0 0 26 26"><path d="M1 15C1 5 8 0 14 0c7 0 12 5 12 11 0 4-3 6-7 6-3 0-5-1-5-3 0-1 1-2 1-3-1-3-5-4-8-2-3 2-3 7 0 10 3 3 8 5 13 3-3 3-7 4-10 3C4 24 1 20 1 15z" fill="#1e8fd0"/><path d="M14 0c7 0 12 5 12 11 0 4-3 6-7 6-3 0-5-1-5-3 0-1 1-2 1-3 0-4-4-6-9-4 1-4 4-7 8-7z" fill="#4ec98a"/></svg>
        </div>
        <div class="app run" style="margin-right:9px">${chrome('#0f8a6a', 'D')}</div>
        <div class="app run" style="margin-right:5px">
          <svg width="18" height="24" viewBox="0 0 18 24"><path d="M8 0l6 6 3 9-5 8-5-3-6-3 3-7z" fill="#7c5ce0"/><path d="M8 0l6 6-2 8-5 6z" fill="#a98cf5"/><path d="M8 0L4 10l3 10-6-3 3-7z" fill="#5c3fc4"/></svg>
        </div>
        <div class="app wide run act" style="margin-right:5px">
          <svg width="25" height="24" viewBox="0 0 25 24"><rect x="6" y="0" width="19" height="24" rx="1" fill="#21a366"/><rect x="15" y="0" width="10" height="8" fill="#33c481"/><rect x="6" y="8" width="19" height="8" fill="#107c41"/><rect x="15" y="8" width="10" height="8" fill="#21a366"/><rect x="6" y="16" width="19" height="8" fill="#185c37"/><rect x="0" y="5" width="13" height="13" rx="1" fill="#107c41"/><text x="6.500" y="15.500" text-anchor="middle" font-size="10.500" font-weight="700" font-family="Open Sans" fill="#fff">X</text></svg>
        </div>
        <div class="app run" style="margin-right:9px">${chrome('#0b5ea8', 'B')}</div>
        <div class="app run">
          <svg width="26" height="24" viewBox="0 0 26 24"><ellipse cx="12" cy="9" rx="11.500" ry="6.500" transform="rotate(-18 12 9)" fill="#f5f1f1" stroke="#c43c3c" stroke-width="1.200"/><path d="M8 4l7 12M16 3l-3 12" stroke="#777" stroke-width="1.200"/><circle cx="17" cy="18" r="2.500" fill="none" stroke="#2a8fd6" stroke-width="1.500"/><circle cx="22" cy="15" r="2.500" fill="none" stroke="#2a8fd6" stroke-width="1.500"/></svg>
        </div>
      </div>
      <div class="tray">
        <svg width="24" height="24" viewBox="0 0 24 24"><circle cx="11" cy="10.500" r="10" fill="#1e90d6" stroke="#fff"/><text x="11" y="16" text-anchor="middle" font-size="15" font-weight="700" font-family="Open Sans" fill="#fff">?</text><circle cx="19" cy="18" r="4.500" fill="#f0a818"/><rect x="18.400" y="15.500" width="1.200" height="5" fill="#fff"/></svg>
        <svg width="13" height="8" fill="none" stroke="#e6e6e6" stroke-width="1.200" style="margin-left:7px"><path d="M.5 7L6.500 1l6 6"/></svg>
        <svg width="16" height="10" fill="none" style="margin-left:10px"><rect x=".5" y=".5" width="13" height="9" stroke="#e6e6e6"/><rect x="2" y="2" width="10" height="6" fill="#fff"/><rect x="14" y="3" width="1.500" height="4" fill="#e6e6e6"/></svg>
        <svg width="17" height="14" fill="none" stroke="#e6e6e6" style="margin-left:7px"><path d="M.5 4.500h3l4-3.500v12l-4-3.500h-3z"/><path d="M10 4.500c1 1.500 1 3.500 0 5M12.500 2.500c2 2.500 2 6.500 0 9" /><path d="M15 1c2.500 3.500 2.500 8.500 0 12" stroke="#666"/></svg>
        <svg width="17" height="17" fill="none" stroke="#e6e6e6" style="margin-left:6px"><path d="M.5 3.500v8h16V.5H5M8.500 11.500v4M4 15.500h9"/><rect x=".5" y=".5" width="4" height="4" fill="#101010"/><rect x="1.800" y="1.800" width="1.500" height="1.500" fill="#e6e6e6" stroke="none"/></svg>
        <div class="clock">18:36<br>25/04/2025</div>
        <svg width="17" height="16" fill="none" stroke="#eee" style="margin-left:16px;margin-right:26px"><path d="M.5 .5h15v11h-5l-2.500 3-2.500-3h-5z"/></svg>
      </div>`;
  }
}

customElements.define('xl-titlebar', XlTitlebar);
customElements.define('xl-tabs', XlTabs);
customElements.define('xl-ribbon-button', XlRibbonButton);
customElements.define('xl-chart-thumb', XlChartThumb);
customElements.define('xl-ribbon', XlRibbon);
customElements.define('xl-formula', XlFormula);
customElements.define('xl-chart', XlChart);
customElements.define('xl-mini-bar', XlMiniBar);
customElements.define('xl-menu-item', XlMenuItem);
customElements.define('xl-menu-sep', XlMenuSep);
customElements.define('xl-menu', XlMenu);
customElements.define('xl-side-button', XlSideButton);
customElements.define('xl-side-buttons', XlSideButtons);
customElements.define('xl-sheet', XlSheet);
customElements.define('xl-sheettabs', XlSheettabs);
customElements.define('xl-status', XlStatus);
customElements.define('xl-taskbar', XlTaskbar);
</script>
</body>
</html>
